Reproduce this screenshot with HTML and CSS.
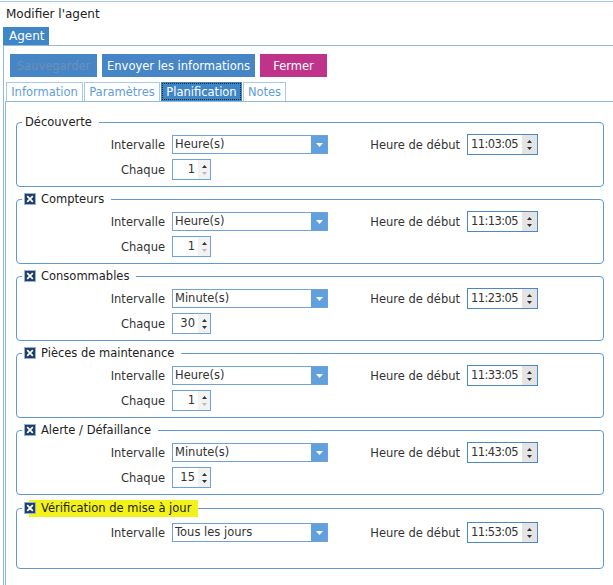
FILE: index.html
```html
<!DOCTYPE html>
<html lang="fr">
<head>
  <meta charset="UTF-8" />
  <title>Modifier l'agent</title>
  <link rel="stylesheet" href="styles.css">
</head>
<body>
  <div class="topline"></div>
  <div class="title">Modifier l'agent</div>
  <div class="main-tabs"><span class="agent-tab">Agent</span></div>
  <div class="agent-panel">
    <div class="toolbar">
      <button class="btn btn-save" disabled>Sauvegarder</button>
      <button class="btn btn-send">Envoyer les informations</button>
      <button class="btn btn-close">Fermer</button>
    </div>
    <div class="tabs">
      <span class="tab t-info">Information</span>
      <span class="tab t-param">Paramètres</span>
      <span class="tab t-plan active">Planification</span>
      <span class="tab t-notes">Notes</span>
    </div>
    <div class="tab-panel">

      <fieldset class="group">
        <legend class="plain">Découverte</legend>
        <div class="row">
          <label class="lbl">Intervalle</label>
          <div class="select"><span class="sel-text">Heure(s)</span><span class="drop"><svg width="7" height="4" viewBox="0 0 7 4"><path d="M0 0H7L3.5 4Z" fill="#fff"/></svg></span></div>
          <label class="lbl-start">Heure de début</label>
          <div class="time"><span class="time-text">11:03:05</span><span class="time-arrows"><svg width="5" height="3" viewBox="0 0 5 3"><path d="M0 3H5L2.5 0Z" fill="#333"/></svg><svg width="5" height="3" viewBox="0 0 5 3"><path d="M0 0H5L2.5 3Z" fill="#333"/></svg></span></div>
        </div>
        <div class="row">
          <label class="lbl">Chaque</label>
          <div class="num"><span class="num-text">1</span><span class="num-arrows"><svg width="5" height="3" viewBox="0 0 5 3"><path d="M0 3H5L2.5 0Z" fill="#333"/></svg><svg width="5" height="3" viewBox="0 0 5 3"><path d="M0 0H5L2.5 3Z" fill="#bbb"/></svg></span></div>
        </div>
      </fieldset>

      <fieldset class="group">
        <legend><svg class="check" width="12" height="12" viewBox="0 0 12 12"><rect x="0.5" y="0.5" width="11" height="11" fill="#233d63" stroke="#8fb3da"/><path d="M3.2 3.2L8.8 8.8M8.8 3.2L3.2 8.8" stroke="#fff" stroke-width="1.7"/></svg>Compteurs</legend>
        <div class="row">
          <label class="lbl">Intervalle</label>
          <div class="select"><span class="sel-text">Heure(s)</span><span class="drop"><svg width="7" height="4" viewBox="0 0 7 4"><path d="M0 0H7L3.5 4Z" fill="#fff"/></svg></span></div>
          <label class="lbl-start">Heure de début</label>
          <div class="time"><span class="time-text">11:13:05</span><span class="time-arrows"><svg width="5" height="3" viewBox="0 0 5 3"><path d="M0 3H5L2.5 0Z" fill="#333"/></svg><svg width="5" height="3" viewBox="0 0 5 3"><path d="M0 0H5L2.5 3Z" fill="#333"/></svg></span></div>
        </div>
        <div class="row">
          <label class="lbl">Chaque</label>
          <div class="num"><span class="num-text">1</span><span class="num-arrows"><svg width="5" height="3" viewBox="0 0 5 3"><path d="M0 3H5L2.5 0Z" fill="#333"/></svg><svg width="5" height="3" viewBox="0 0 5 3"><path d="M0 0H5L2.5 3Z" fill="#bbb"/></svg></span></div>
        </div>
      </fieldset>

      <fieldset class="group">
        <legend><svg class="check" width="12" height="12" viewBox="0 0 12 12"><rect x="0.5" y="0.5" width="11" height="11" fill="#233d63" stroke="#8fb3da"/><path d="M3.2 3.2L8.8 8.8M8.8 3.2L3.2 8.8" stroke="#fff" stroke-width="1.7"/></svg>Consommables</legend>
        <div class="row">
          <label class="lbl">Intervalle</label>
          <div class="select"><span class="sel-text">Minute(s)</span><span class="drop"><svg width="7" height="4" viewBox="0 0 7 4"><path d="M0 0H7L3.5 4Z" fill="#fff"/></svg></span></div>
          <label class="lbl-start">Heure de début</label>
          <div class="time"><span class="time-text">11:23:05</span><span class="time-arrows"><svg width="5" height="3" viewBox="0 0 5 3"><path d="M0 3H5L2.5 0Z" fill="#333"/></svg><svg width="5" height="3" viewBox="0 0 5 3"><path d="M0 0H5L2.5 3Z" fill="#333"/></svg></span></div>
        </div>
        <div class="row">
          <label class="lbl">Chaque</label>
          <div class="num"><span class="num-text">30</span><span class="num-arrows"><svg width="5" height="3" viewBox="0 0 5 3"><path d="M0 3H5L2.5 0Z" fill="#333"/></svg><svg width="5" height="3" viewBox="0 0 5 3"><path d="M0 0H5L2.5 3Z" fill="#333"/></svg></span></div>
        </div>
      </fieldset>

      <fieldset class="group">
        <legend><svg class="check" width="12" height="12" viewBox="0 0 12 12"><rect x="0.5" y="0.5" width="11" height="11" fill="#233d63" stroke="#8fb3da"/><path d="M3.2 3.2L8.8 8.8M8.8 3.2L3.2 8.8" stroke="#fff" stroke-width="1.7"/></svg>Pièces de maintenance</legend>
        <div class="row">
          <label class="lbl">Intervalle</label>
          <div class="select"><span class="sel-text">Heure(s)</span><span class="drop"><svg width="7" height="4" viewBox="0 0 7 4"><path d="M0 0H7L3.5 4Z" fill="#fff"/></svg></span></div>
          <label class="lbl-start">Heure de début</label>
          <div class="time"><span class="time-text">11:33:05</span><span class="time-arrows"><svg width="5" height="3" viewBox="0 0 5 3"><path d="M0 3H5L2.5 0Z" fill="#333"/></svg><svg width="5" height="3" viewBox="0 0 5 3"><path d="M0 0H5L2.5 3Z" fill="#333"/></svg></span></div>
        </div>
        <div class="row">
          <label class="lbl">Chaque</label>
          <div class="num"><span class="num-text">1</span><span class="num-arrows"><svg width="5" height="3" viewBox="0 0 5 3"><path d="M0 3H5L2.5 0Z" fill="#333"/></svg><svg width="5" height="3" viewBox="0 0 5 3"><path d="M0 0H5L2.5 3Z" fill="#bbb"/></svg></span></div>
        </div>
      </fieldset>

      <fieldset class="group">
        <legend><svg class="check" width="12" height="12" viewBox="0 0 12 12"><rect x="0.5" y="0.5" width="11" height="11" fill="#233d63" stroke="#8fb3da"/><path d="M3.2 3.2L8.8 8.8M8.8 3.2L3.2 8.8" stroke="#fff" stroke-width="1.7"/></svg>Alerte / Défaillance</legend>
        <div class="row">
          <label class="lbl">Intervalle</label>
          <div class="select"><span class="sel-text">Minute(s)</span><span class="drop"><svg width="7" height="4" viewBox="0 0 7 4"><path d="M0 0H7L3.5 4Z" fill="#fff"/></svg></span></div>
          <label class="lbl-start">Heure de début</label>
          <div class="time"><span class="time-text">11:43:05</span><span class="time-arrows"><svg width="5" height="3" viewBox="0 0 5 3"><path d="M0 3H5L2.5 0Z" fill="#333"/></svg><svg width="5" height="3" viewBox="0 0 5 3"><path d="M0 0H5L2.5 3Z" fill="#333"/></svg></span></div>
        </div>
        <div class="row">
          <label class="lbl">Chaque</label>
          <div class="num"><span class="num-text">15</span><span class="num-arrows"><svg width="5" height="3" viewBox="0 0 5 3"><path d="M0 3H5L2.5 0Z" fill="#333"/></svg><svg width="5" height="3" viewBox="0 0 5 3"><path d="M0 0H5L2.5 3Z" fill="#333"/></svg></span></div>
        </div>
      </fieldset>

      <fieldset class="group">
        <legend class="marked"><svg class="check" width="12" height="12" viewBox="0 0 12 12"><rect x="0.5" y="0.5" width="11" height="11" fill="#233d63" stroke="#8fb3da"/><path d="M3.2 3.2L8.8 8.8M8.8 3.2L3.2 8.8" stroke="#fff" stroke-width="1.7"/></svg>Vérification de mise à jour</legend>
        <div class="row">
          <label class="lbl">Intervalle</label>
          <div class="select"><span class="sel-text">Tous les jours</span><span class="drop"><svg width="7" height="4" viewBox="0 0 7 4"><path d="M0 0H7L3.5 4Z" fill="#fff"/></svg></span></div>
          <label class="lbl-start">Heure de début</label>
          <div class="time"><span class="time-text">11:53:05</span><span class="time-arrows"><svg width="5" height="3" viewBox="0 0 5 3"><path d="M0 3H5L2.5 0Z" fill="#333"/></svg><svg width="5" height="3" viewBox="0 0 5 3"><path d="M0 0H5L2.5 3Z" fill="#333"/></svg></span></div>
        </div>
        <div class="row spacer"></div>
      </fieldset>

    </div>
  </div>
</body>
</html>
```

FILE: styles.css
```css
body {
  margin: 0;
  font-family: "DejaVu Sans", sans-serif;
  font-size: 11.5px;
  color: #333;
  background: #fff;
}
.topline {
  height: 1px;
  margin-top: 1px;
  background: #a6c8ea;
}
.title {
  height: 25px;
  line-height: 25px;
  padding-left: 6px;
  font-size: 12px;
  color: #222;
}
.main-tabs {
  padding-left: 3px;
  height: 18px;
}
.agent-tab {
  display: inline-block;
  width: 46px;
  height: 18px;
  line-height: 18px;
  box-sizing: border-box;
  padding-left: 6px;
  background: #3f86c7;
  color: #fff;
  font-size: 12px;
}
.agent-panel {
  margin-left: 3px;
  border-top: 1px solid #8fbbe4;
  border-left: 1px solid #8fbbe4;
  padding-top: 8px;
}
.toolbar {
  display: flex;
  gap: 5px;
  padding-left: 6px;
}
.btn {
  height: 23px;
  border: none;
  padding: 0;
  font-family: "DejaVu Sans", sans-serif;
  font-size: 11.5px;
  color: #fff;
  background: #4686c6;
}
.btn-save {
  width: 87px;
  color: #6f8fb4;
}
.btn-send { width: 153px; }
.btn-close {
  width: 67px;
  background: #c0338a;
}
.tabs {
  display: flex;
  gap: 1px;
  margin-top: 5px;
  padding-left: 2px;
}
.tab {
  height: 19px;
  line-height: 18px;
  box-sizing: border-box;
  border: 1px solid #a9cbeb;
  border-bottom: none;
  text-align: center;
  color: #5f9ed8;
  font-size: 11.5px;
}
.t-info { width: 77px; }
.t-param { width: 76px; }
.t-plan { width: 81px; }
.t-notes { width: 43px; }
.tab.active {
  background: #3f86c7;
  border-color: #3f86c7;
  color: #fff;
  outline: 1px dotted #222;
  outline-offset: -2px;
}
.tab-panel {
  margin-left: 1px;
  border-top: 1px solid #8fbbe4;
  border-left: 1px solid #8fbbe4;
  padding: 13px 0 16px 10px;
}
.group {
  width: 588px;
  box-sizing: border-box;
  margin: 0 0 5px 0;
  padding: 5px 0 6px 0;
  border: 1px solid #5f98d3;
  border-radius: 4px;
}
.group legend {
  margin-left: 5px;
  padding: 0 7px 0 2px;
  line-height: 14px;
  font-size: 11.5px;
  color: #222;
}
.group legend.plain {
  padding-left: 3px;
}
.check {
  vertical-align: -2px;
  margin-right: 5px;
}
.group legend.marked {
  background: linear-gradient(to right, transparent 7px, #f3f319 7px);
  line-height: 17px;
}
.row {
  display: flex;
  align-items: center;
  height: 21px;
}
.row + .row {
  margin-top: 4px;
}
.row.spacer {
  height: 15px;
}
.lbl {
  width: 148px;
  text-align: right;
  margin-right: 7px;
}
.select {
  display: flex;
  width: 156px;
  height: 19px;
  box-sizing: border-box;
  border: 1px solid #6fa2d8;
  background: #fff;
}
.sel-text {
  flex: 1;
  padding-left: 2px;
  line-height: 17px;
}
.drop {
  width: 16px;
  background: #60a0dc;
  display: flex;
  align-items: center;
  justify-content: center;
}
.lbl-start {
  width: 132px;
  text-align: right;
  margin-right: 7px;
}
.time {
  display: flex;
  width: 71px;
  height: 21px;
  box-sizing: border-box;
  border: 1px solid #4c88c8;
}
.time-text {
  flex: 1;
  padding-left: 3px;
  line-height: 19px;
  letter-spacing: -0.6px;
}
.time-arrows, .num-arrows {
  width: 15px;
  background: #e4e4e4;
  display: flex;
  flex-direction: column;
  align-items: center;
  justify-content: center;
  gap: 4px;
}
.num {
  display: flex;
  width: 39px;
  height: 21px;
  box-sizing: border-box;
  border: 1px solid #6fa2d8;
}
.num-text {
  flex: 1;
  text-align: right;
  padding-right: 3px;
  line-height: 19px;
}
.num-arrows {
  width: 12px;
  background: #f2f2f2;
}
```
